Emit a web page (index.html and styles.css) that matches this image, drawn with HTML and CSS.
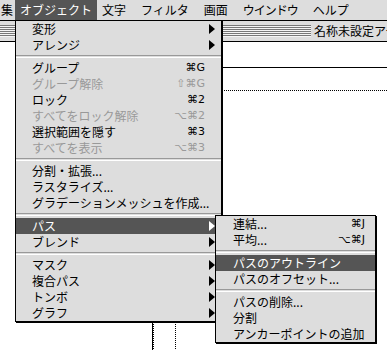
FILE: index.html
```html
<!DOCTYPE html>
<html>
<head>
  <meta charset="utf-8">
  <title>オブジェクト メニュー</title>
  <link rel="stylesheet" href="styles.css">
</head>
<body>
<div class="screen">

  <!-- Menu bar -->
  <div class="menubar">
    <span class="mb-item mb-cut">集</span>
    <span class="mb-item mb-active">オブジェクト</span>
    <span class="mb-item">文字</span>
    <span class="mb-item">フィルタ</span>
    <span class="mb-item">画面</span>
    <span class="mb-item mb-narrow">ウインドウ</span>
    <span class="mb-item">ヘルプ</span>
  </div>

  <!-- Document window behind the menus -->
  <div class="window">
    <div class="titlebar">
      <span class="stripes"></span>
      <span class="title">名称未設定アートワーク</span>
    </div>
    <div class="canvas">
      <div class="artboard"></div>
      <div class="printable"></div>
    </div>
  </div>

  <!-- Object menu -->
  <div class="menu menu-main">
    <div class="item"><span class="label">変形</span><span class="arrow"></span></div>
    <div class="item"><span class="label">アレンジ</span><span class="arrow"></span></div>
    <div class="sep"></div>
    <div class="item"><span class="label">グループ</span><span class="key">⌘G</span></div>
    <div class="item off"><span class="label">グループ解除</span><span class="key">⇧⌘G</span></div>
    <div class="item"><span class="label">ロック</span><span class="key">⌘2</span></div>
    <div class="item off"><span class="label">すべてをロック解除</span><span class="key">⌥⌘2</span></div>
    <div class="item"><span class="label">選択範囲を隠す</span><span class="key">⌘3</span></div>
    <div class="item off"><span class="label">すべてを表示</span><span class="key">⌥⌘3</span></div>
    <div class="sep"></div>
    <div class="item"><span class="label">分割・拡張...</span></div>
    <div class="item"><span class="label">ラスタライズ...</span></div>
    <div class="item"><span class="label">グラデーションメッシュを作成...</span></div>
    <div class="sep"></div>
    <div class="item on"><span class="label">パス</span><span class="arrow"></span></div>
    <div class="item"><span class="label">ブレンド</span><span class="arrow"></span></div>
    <div class="sep"></div>
    <div class="item"><span class="label">マスク</span><span class="arrow"></span></div>
    <div class="item"><span class="label">複合パス</span><span class="arrow"></span></div>
    <div class="item"><span class="label">トンボ</span><span class="arrow"></span></div>
    <div class="item"><span class="label">グラフ</span><span class="arrow"></span></div>
  </div>

  <!-- Path submenu -->
  <div class="menu menu-sub">
    <div class="item"><span class="label">連結...</span><span class="key">⌘J</span></div>
    <div class="item"><span class="label">平均...</span><span class="key">⌥⌘J</span></div>
    <div class="sep"></div>
    <div class="item on"><span class="label">パスのアウトライン</span></div>
    <div class="item"><span class="label">パスのオフセット...</span></div>
    <div class="sep"></div>
    <div class="item"><span class="label">パスの削除...</span></div>
    <div class="item"><span class="label">分割</span></div>
    <div class="item"><span class="label">アンカーポイントの追加</span></div>
  </div>

</div>
</body>
</html>
```

FILE: styles.css
```css
html, body {
  margin: 0;
  padding: 0;
  background: #fff;
}
.screen {
  position: relative;
  width: 387px;
  height: 350px;
  overflow: hidden;
  font-family: "Noto Sans CJK JP", sans-serif;
  font-size: 12px;
  color: #000;
}

/* Menu bar */
.menubar {
  display: flex;
  height: 20px;
  line-height: 20px;
  background: #dddddd;
  border-bottom: 1px solid #000;
  white-space: nowrap;
}
.mb-item {
  padding: 0 5px;
  margin-right: 5px;
}
.mb-cut {
  padding: 0 1px;
  margin-right: 1px;
}
.mb-active {
  background: #555555;
  color: #fff;
  margin-right: 0;
}
.mb-narrow {
  letter-spacing: -1px;
}

/* Window behind */
.window {
  position: absolute;
  left: 0;
  top: 21px;
  width: 387px;
  bottom: 0;
}
.titlebar {
  display: flex;
  align-items: center;
  height: 20px;
  background: #dddddd;
  border-bottom: 1px solid #000;
  white-space: nowrap;
  overflow: hidden;
}
.stripes {
  flex: 0 0 311px;
  height: 12px;
  background: repeating-linear-gradient(to bottom, #777 0, #777 1px, #f4f4f4 1px, #f4f4f4 2px);
}
.title {
  padding-left: 3px;
  line-height: 20px;
}
.canvas {
  position: relative;
  height: 100%;
  background: #fff;
}
.artboard {
  position: absolute;
  left: 152px;
  top: 25px;
  right: -10px;
  bottom: -10px;
  border-top: 1px solid #000;
  border-left: 1px solid #000;
}
.artboard::after {
  content: "";
  position: absolute;
  left: 0;
  top: 0;
  bottom: 0;
  border-left: 1px dotted #000;
}
.printable {
  position: absolute;
  left: 175px;
  top: 48px;
  right: -10px;
  bottom: -10px;
  border-top: 1px dotted #000;
  border-left: 1px dotted #000;
}

/* Menus */
.menu {
  position: absolute;
  background: #dddddd;
  border: 1px solid #000;
  box-shadow: 1px 1px 0 #000;
}
.menu-main {
  left: 15px;
  top: 20px;
  width: 205px;
}
.menu-sub {
  left: 215px;
  top: 215px;
  width: 159px;
}
.item {
  display: flex;
  align-items: center;
  height: 16px;
  line-height: 16px;
  padding: 0 6px 0 16px;
  white-space: nowrap;
}
.menu-sub .item {
  padding: 0 10px 0 17px;
}
.label {
  flex: 1;
}
.key {
  font-family: "DejaVu Sans", sans-serif;
  font-size: 11px;
  margin-right: 10px;
}
.menu-sub .key {
  margin-right: 0;
}
.arrow {
  width: 0;
  height: 0;
  border-left: 6px solid #000;
  border-top: 5px solid transparent;
  border-bottom: 5px solid transparent;
}
.item.off {
  color: #999999;
}
.item.on {
  background: #555555;
  color: #fff;
}
.item.on .arrow {
  border-left-color: #fff;
}
.sep {
  height: 1px;
  margin: 2px 0;
  border-top: 1px solid #999999;
  border-bottom: 1px solid #ffffff;
}
```
